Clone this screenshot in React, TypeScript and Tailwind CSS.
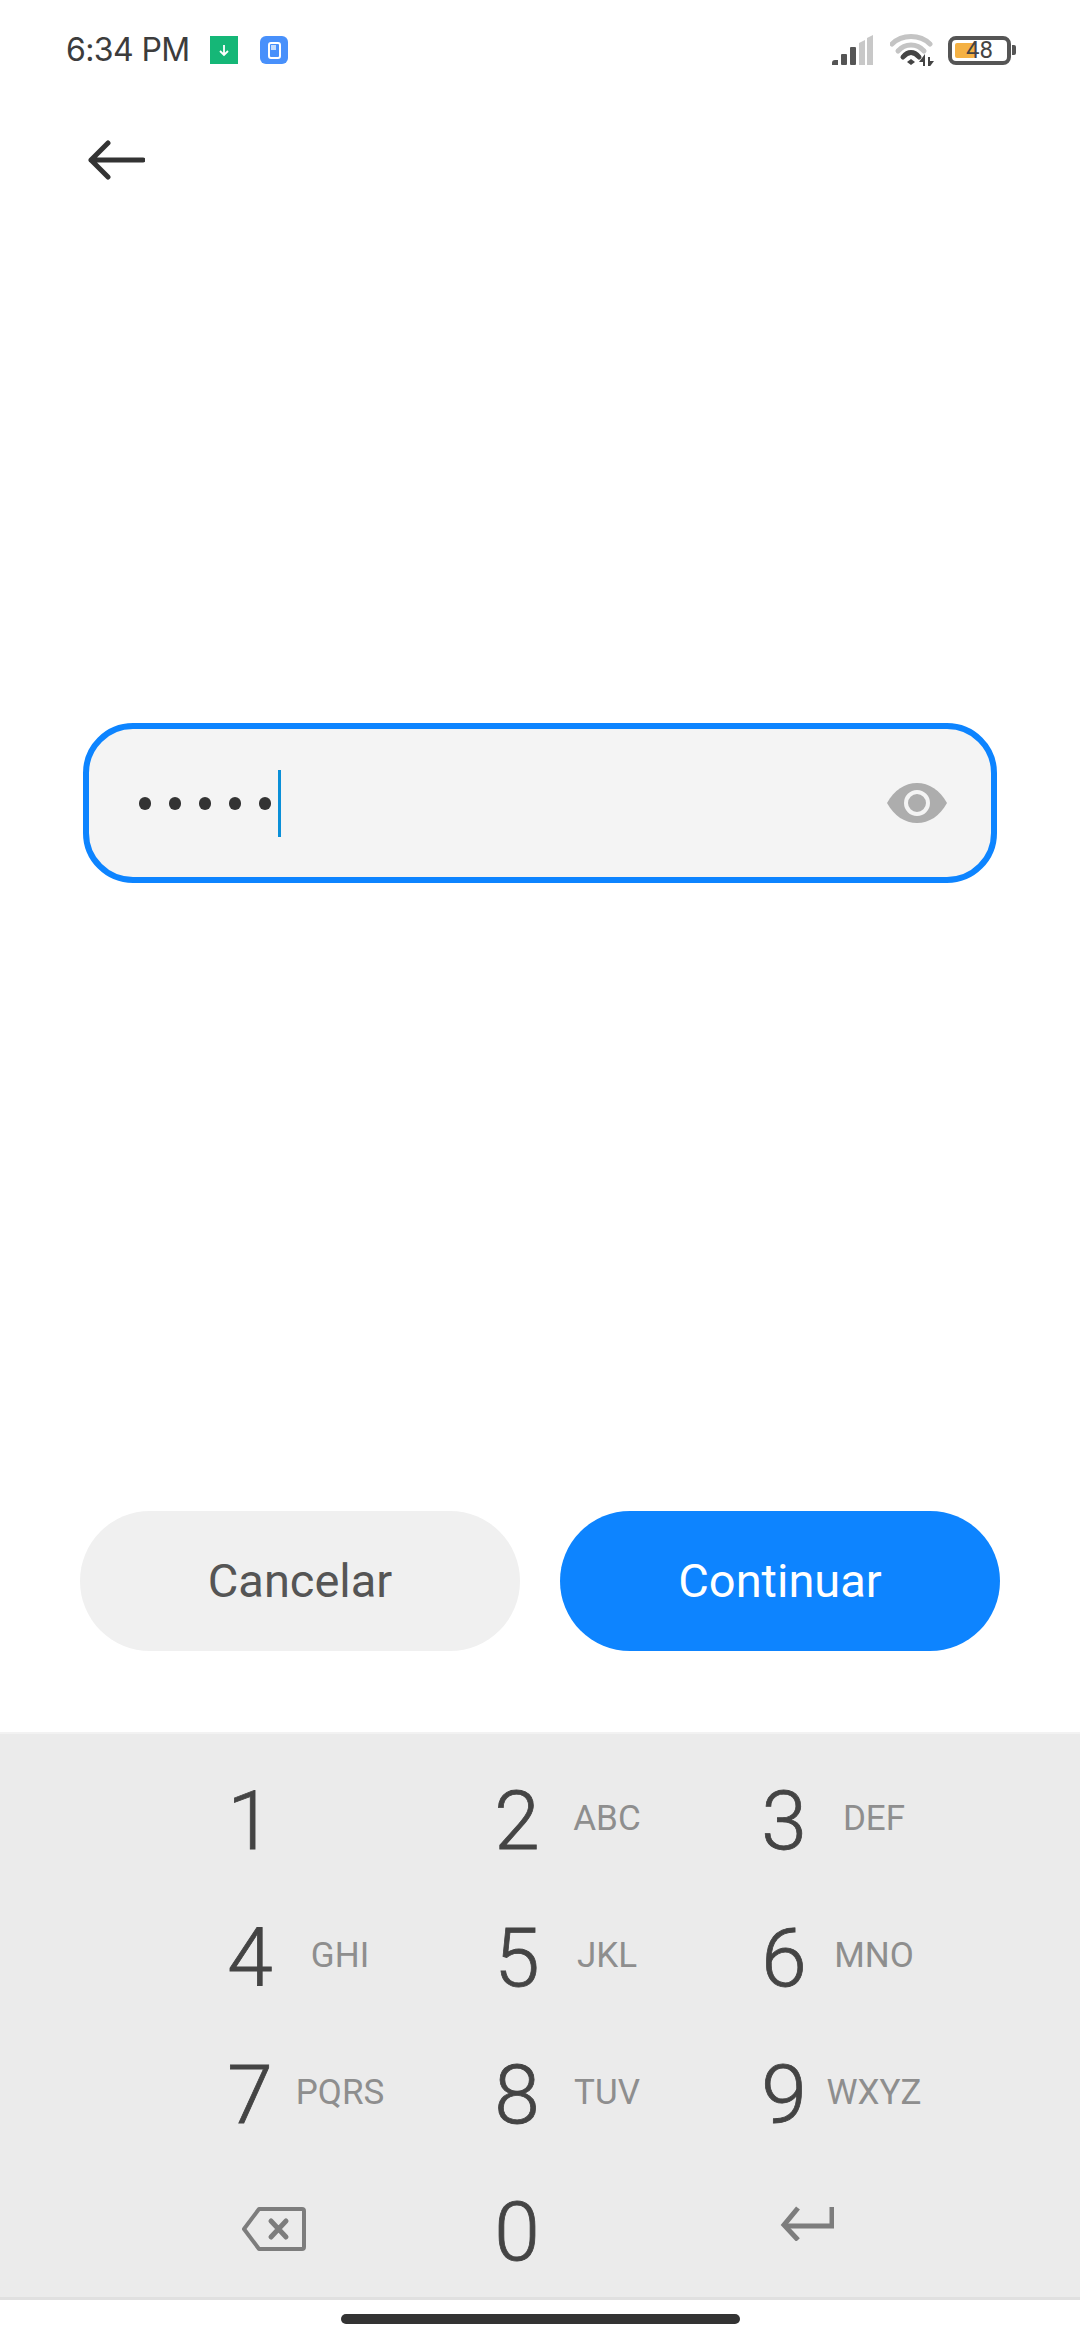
import React from 'react';

const keys = [
  { digit: '1', letters: '' },
  { digit: '2', letters: 'ABC' },
  { digit: '3', letters: 'DEF' },
  { digit: '4', letters: 'GHI' },
  { digit: '5', letters: 'JKL' },
  { digit: '6', letters: 'MNO' },
  { digit: '7', letters: 'PQRS' },
  { digit: '8', letters: 'TUV' },
  { digit: '9', letters: 'WXYZ' },
];

const Signal = () => (
  <svg width="42" height="30" viewBox="0 0 42 30" fill="none">
    <path d="M1 30v-2a3 3 0 0 1 3-3h3v5z" fill="#555" />
    <rect x="10" y="19" width="6" height="11" rx="1" fill="#555" />
    <rect x="19" y="12" width="6" height="18" rx="1" fill="#555" />
    <path d="M28 8l6-3v25h-6z" fill="#c8c8c8" />
    <path d="M36 3l6-3v30h-6z" fill="#c8c8c8" />
  </svg>
);

const Wifi = () => (
  <svg width="44" height="32" viewBox="0 0 44 32" fill="none">
    <path d="M2 10C12 0 30 0 40 10" stroke="#c4c4c4" strokeWidth="5" strokeLinecap="round" />
    <path d="M8 17C15 9 27 9 34 17" stroke="#c4c4c4" strokeWidth="5" strokeLinecap="round" />
    <path d="M13 23C18 17 24 17 29 23" stroke="#444" strokeWidth="5" strokeLinecap="round" />
    <path d="M17 28l4-3 4 3-4 3z" fill="#444" />
    <path d="M34 32v-9l-3 4h3M39 23v9l3-4h-3" stroke="#444" strokeWidth="2" />
  </svg>
);

const Eye = () => (
  <svg width="60" height="40" viewBox="0 0 60 40">
    <path d="M0 20C7 7 18 0 30 0s23 7 30 20C53 33 42 40 30 40S7 33 0 20z" fill="#adadad" />
    <circle cx="30" cy="20" r="11" fill="none" stroke="#f4f4f4" strokeWidth="4" />
  </svg>
);

const Backspace = () => (
  <svg width="64" height="44" viewBox="0 0 64 44" fill="none" stroke="#7d7d7d">
    <path d="M17 2h43a2 2 0 0 1 2 2v36a2 2 0 0 1-2 2H17L2 22z" strokeWidth="4" strokeLinejoin="round" />
    <path d="M29 14l15 16M44 14L29 30" strokeWidth="5" strokeLinecap="round" />
  </svg>
);

const EnterKey = () => (
  <svg width="54" height="36" viewBox="0 0 54 36" fill="none" stroke="#7d7d7d" strokeWidth="5">
    <path d="M52 2v19H5" />
    <path d="M18 3L4 20l14 15" />
  </svg>
);

export default function App() {
  return (
    <div className="flex h-[2340px] w-[1080px] flex-col bg-white font-['Roboto',sans-serif]">
      {/* Status bar */}
      <div className="flex h-[100px] shrink-0 items-center justify-between pl-[66px] pr-[64px]">
        <div className="flex items-center">
          <span className="w-[144px] font-['Inter',sans-serif] text-[32px] tracking-[-0.6px] text-[#3c3c3c]">6:34 PM</span>
          <div className="flex h-[28px] w-[28px] items-center justify-center bg-[#15b777]">
            <svg width="14" height="14" viewBox="0 0 14 14" fill="none" stroke="#fff" strokeWidth="1.8">
              <path d="M7 2v10M3 8l4 4 4-4" />
            </svg>
          </div>
          <div className="ml-[22px] flex h-[28px] w-[28px] items-center justify-center rounded-[6px] bg-[#4890fb]">
            <div className="h-[17px] w-[13px] rounded-[3px] border-2 border-white p-[1px]">
              <div className="h-[5px] w-[5px] bg-[#c4dcfd]" />
            </div>
          </div>
        </div>
        <div className="flex items-center">
          <Signal />
          <div className="ml-[17px]">
            <Wifi />
          </div>
          <div className="ml-[14px] flex items-center">
            <div className="relative flex h-[29px] w-[63px] items-center rounded-[8px] border-[4px] border-[#555] px-[3px]">
              <div className="h-[15px] w-[20px] rounded-[2px] bg-[#f4b144]" />
              <span className="absolute left-[14px] text-[24px] leading-none text-[#444]">48</span>
            </div>
            <div className="ml-[1px] h-[10px] w-[4px] rounded-r-[2px] bg-[#555]" />
          </div>
        </div>
      </div>

      {/* Back arrow */}
      <div className="mt-[39px] flex h-[42px] items-center pl-[87px]">
        <svg width="58" height="40" viewBox="0 0 58 40" fill="none" stroke="#333" strokeWidth="5" strokeLinecap="round" strokeLinejoin="round">
          <path d="M56 20H4M21 3L4 20l17 17" />
        </svg>
      </div>

      {/* Password field */}
      <div className="mt-[542px] px-[83px]">
        <div className="flex h-[160px] w-[914px] items-center rounded-[50px] border-[6px] border-[#0d84ff] bg-[#f4f4f4] pl-[50px] pr-[44px]">
          <div className="flex items-center gap-[18px]">
            <span className="h-[13px] w-[12px] rounded-full bg-[#333]" />
            <span className="h-[13px] w-[12px] rounded-full bg-[#333]" />
            <span className="h-[13px] w-[12px] rounded-full bg-[#333]" />
            <span className="h-[13px] w-[12px] rounded-full bg-[#333]" />
            <span className="h-[13px] w-[12px] rounded-full bg-[#333]" />
          </div>
          <div className="ml-[7px] h-[67px] w-[3px] bg-[#0a8fd8]" />
          <div className="ml-auto">
            <Eye />
          </div>
        </div>
      </div>

      {/* Buttons */}
      <div className="mt-[628px] flex gap-[40px] px-[80px]">
        <button className="h-[140px] w-[440px] rounded-full bg-[#f0f0f0] text-[47px] text-[#555]">Cancelar</button>
        <button className="h-[140px] w-[440px] rounded-full bg-[#0d84ff] text-[47px] text-white">Continuar</button>
      </div>

      {/* Number pad */}
      <div className="mt-[81px] h-[568px] border-t-[2px] border-b-[3px] border-t-[#f2f2f2] border-b-[#e0e0e0] bg-[#ebebeb] pl-[205px] pt-[18px]">
        <div className="grid grid-cols-[267px_267px_267px] auto-rows-[137px]">
          {keys.map((key) => (
            <div key={key.digit} className="flex items-center">
              <span className="w-[90px] text-center text-[82px] font-light leading-none text-[#444] [-webkit-text-stroke:0.8px_#444]">{key.digit}</span>
              <span className="-mx-[10px] w-[110px] pb-[3px] text-center text-[35px] font-normal text-[#8e8e8e]">{key.letters}</span>
            </div>
          ))}
          <div className="flex items-center">
            <span className="ml-[24px] flex w-[90px] justify-center pb-[6px]">
              <Backspace />
            </span>
          </div>
          <div className="flex items-center">
            <span className="w-[90px] text-center text-[82px] font-light leading-none text-[#444] [-webkit-text-stroke:0.8px_#444]">0</span>
          </div>
          <div className="flex items-center">
            <span className="ml-[23px] flex w-[90px] justify-center pb-[18px]">
              <EnterKey />
            </span>
          </div>
        </div>
      </div>

      {/* Gesture bar */}
      <div className="flex flex-1 justify-center pt-[14px]">
        <div className="h-[10px] w-[399px] rounded-full bg-[#333]" />
      </div>
    </div>
  );
}
